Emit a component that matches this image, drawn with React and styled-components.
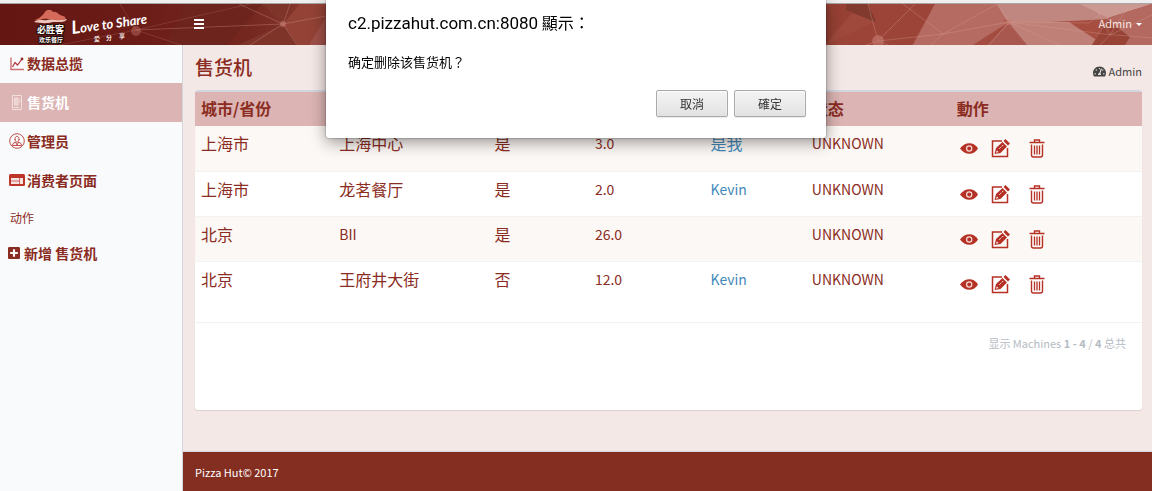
import React from "react";
import styled, { createGlobalStyle, css } from "styled-components";
import { FaTachometerAlt, FaPlusSquare } from "react-icons/fa";

const latin = '"Noto Sans CJK SC", "Open Sans", sans-serif';

const Global = createGlobalStyle`
  *, *::before, *::after { box-sizing: border-box; }
  html, body, #root { height: 100%; }
  body { margin: 0; font-family: ${latin}; font-size: 14px; color: #8b2c22; background: #f4e8e6; }
  a { text-decoration: none; }
  button { font-family: inherit; cursor: pointer; }
`;

const Page = styled.div`
  display: flex;
  flex-direction: column;
  min-height: 100%;
`;

const BrowserEdge = styled.div`
  height: 4px;
  flex: none;
  background: #f0eff0;
  border-bottom: 1px solid #a9a3a3;
`;

const Header = styled.header`
  position: relative;
  display: flex;
  align-items: center;
  height: 41px;
  flex: none;
  overflow: hidden;
  background: #7c261c;
`;

const Backdrop = styled.svg`
  position: absolute;
  inset: 0;
  width: 100%;
  height: 100%;
`;

const Brand = styled.a`
  position: relative;
  display: flex;
  width: 182px;
  height: 41px;
  padding-left: 32px;
`;

const MenuButton = styled.button`
  position: relative;
  display: flex;
  padding: 0 12px 2px;
  border: 0;
  background: none;
  color: #fff;
`;

const UserButton = styled.button`
  position: relative;
  display: flex;
  align-items: center;
  gap: 4px;
  margin-left: auto;
  padding: 0 10px 4px;
  border: 0;
  background: none;
  color: #f6e6e3;
  font-size: 11px;
  line-height: 16px;
`;

const Caret = styled.span`
  margin-top: 4px;
  border: 3px solid transparent;
  border-top-color: #fff;
  border-bottom: 0;
`;

const Body = styled.div`
  display: flex;
  flex: 1;
`;

const Sidebar = styled.nav`
  width: 183px;
  flex: none;
  background: #f9fafc;
  border-right: 1px solid #d2d6de;
`;

const NavItem = styled.a`
  display: flex;
  align-items: center;
  gap: ${(p) => (p.$compact ? 4 : 2)}px;
  height: ${(p) => (p.$first ? 38 : 39)}px;
  padding-left: ${(p) => (p.$compact ? 8 : 9)}px;
  padding-bottom: ${(p) => (p.$compact ? 0 : 2)}px;
  font-size: 14px;
  font-weight: 700;
  color: #8b2c22;
  ${(p) => p.$active && css`
    background: #dbb4b3;
    color: #fff;
  `}
  svg { width: ${(p) => (p.$compact ? 12 : 16)}px; height: 16px; flex: none; }
`;

const NavHeading = styled.div`
  padding: 9px 10px 0;
  height: 33px;
  font-size: 12px;
  line-height: 18px;
`;

const Main = styled.main`
  display: flex;
  flex: 1;
  flex-direction: column;
  min-width: 0;
`;

const TitleBar = styled.div`
  display: flex;
  align-items: flex-start;
  justify-content: space-between;
  height: 45px;
  padding: 7px 10px 0 12px;
`;

const Title = styled.h1`
  margin: 0;
  font-size: 19px;
  line-height: 30px;
  font-weight: 500;
`;

const Crumb = styled.a`
  display: flex;
  align-items: center;
  gap: 3px;
  padding-top: 11px;
  font-size: 11px;
  line-height: 16px;
  color: #444;
`;

const Card = styled.section`
  flex: 1;
  margin: 0 10px 41px 12px;
  background: #fff;
  border-top: 2px solid #d2d6de;
  border-radius: 3px;
  box-shadow: 0 1px 1px rgba(0, 0, 0, 0.1);
`;

const Table = styled.table`
  width: 100%;
  border-collapse: collapse;
  table-layout: fixed;
  text-align: left;
`;

const Col = styled.col`
  width: ${(p) => p.$w};
`;

const Th = styled.th`
  height: 34px;
  padding: 0 6px 2px;
  background: #dbb4b3;
  font-size: 16px;
  line-height: 24px;
  font-weight: 700;
`;

const Row = styled.tr`
  height: 45px;
  border-bottom: 1px solid #f2f2f2;
  background: ${(p) => (p.$odd ? "#fcf8f5" : "#fff")};
  &:last-child { height: 61px; }
`;

const Td = styled.td`
  padding: 5px 6px 0;
  vertical-align: top;
  font-size: ${(p) => (p.$latin ? 14 : 16)}px;
  line-height: 24px;
  a { color: #4489b9; }
`;

const Actions = styled.div`
  display: flex;
  align-items: center;
  gap: 12px;
  padding: 8px 0 0 3px;
`;

const IconButton = styled.button`
  display: flex;
  margin-right: ${(p) => (p.$wide ? 7 : 0)}px;
  padding: 0;
  border: 0;
  background: none;
  color: #b53126;
`;

const Summary = styled.p`
  margin: 0;
  padding: 11px 16px;
  text-align: right;
  font-size: 11px;
  line-height: 18px;
  color: #b5bbc3;
`;

const Footer = styled.footer`
  height: 40px;
  flex: none;
  padding: 11px 12px;
  border-top: 1px solid #d2d6de;
  background: #842d21;
  color: #fff;
  font-size: 11px;
  line-height: 18px;
`;

const Dialog = styled.div`
  position: fixed;
  top: 0;
  left: 50%;
  width: 500px;
  transform: translateX(-50%);
  padding: 10px 20px 21px 22px;
  background: #fff;
  border-radius: 0 0 3px 3px;
  box-shadow: 0 0 2px rgba(0, 0, 0, 0.5), 0 4px 16px rgba(0, 0, 0, 0.42);
  color: #000;
`;

const DialogTitle = styled.h2`
  margin: 0 0 16px;
  font-family: "Noto Sans CJK TC", sans-serif;
  font-size: 16px;
  line-height: 24px;
  font-weight: 400;
`;

const Host = styled.span`
  font-family: Roboto, sans-serif;
  font-size: 17px;
`;

const DialogText = styled.p`
  margin: 0 0 17px;
  font-family: "Noto Sans CJK TC", sans-serif;
  font-size: 13px;
  line-height: 22px;
`;

const DialogButtons = styled.div`
  display: flex;
  justify-content: flex-end;
  gap: 6px;
`;

const DialogButton = styled.button`
  width: 72px;
  height: 27px;
  padding: 0;
  border: 1px solid #aaa;
  border-radius: 2px;
  background: linear-gradient(#f3f3f3, #ededed 40%, #e2e2e2);
  box-shadow: 0 1px 0 rgba(0, 0, 0, 0.08), inset 0 1px 2px rgba(255, 255, 255, 0.75);
  color: #333;
  font-family: "Noto Sans CJK TC", sans-serif;
  font-size: 12px;
`;

const HeaderBackdrop = () => (
  <Backdrop viewBox="0 0 1152 41" preserveAspectRatio="none" aria-hidden="true">
    <defs>
      <linearGradient id="sky">
        <stop offset="0" stopColor="#631612" />
        <stop offset=".12" stopColor="#6c1c17" />
        <stop offset=".22" stopColor="#752820" />
        <stop offset=".28" stopColor="#8d3e34" />
        <stop offset="1" stopColor="#a94f42" />
      </linearGradient>
    </defs>
    <path fill="url(#sky)" d="M0 0h1152v41H0z" />
    <path fill="#6c241d" d="M187 0h75l-35 41h-62z" />
    <path fill="#7f342a" d="M238 41 283 20 262 0h31l-8 22 13 19z" />
    <path fill="#944236" d="M283 20 300 0h26v41h-28z" />
    <path fill="#9e5048" d="M309 41 326 13v28z" />
    <path fill="#974034" d="M826 0h34l-34 39z" />
    <path fill="#833a2e" d="M846 0h22l14 21-36-15z" />
    <path fill="#9c4438" d="M868 0h67l-24 41h-85l50-24z" />
    <path fill="#b56b61" d="M935 0h62l12 15-60 16-35 10z" />
    <path fill="#b56b61" d="m935 0-22 41h60l36-23z" />
    <path fill="#c08780" d="M997 0h112v15l-100 5z" />
    <path fill="#be8077" d="m1009 18 60 0 35 23h-116z" />
    <path fill="#a95850" d="m987 41 22-22 18 22z" />
    <path fill="#cb9992" d="M1080 0h72l-44 14z" />
    <path fill="#b36960" d="m1108 14 44-14v41h-60z" />
    <path fill="#974436" d="m1092 41 16-25 22 17-5 8z" />
    <g stroke="#dda49a" strokeOpacity=".3" strokeWidth="1" fill="none">
      <path d="M136 26 250 0M136 26 120 0M136 26l45 15M60 41l76-15" strokeOpacity=".18" />
      <path d="M239 0l44 20 43-8M250 41l33-21 7-20M283 20l14 21M136 26l147-6M868 0l10 37 37-37M878 37l65-7L903 0M878 37l-12 4M878 37l10 4M943 30l-12 11M943 30l66-12L997 0M943 30l54-30M1009 18l80 1 25-19M1009 18l50 23M1009 18l-20 23M1009 18l95 12 48 4M1110 31l-16-31M1110 31l20-31M1110 31l-10 10M1110 31l42-20" />
    </g>
    <g fill="#c77b70" fillOpacity=".6">
      <circle cx="136" cy="27" r="5" fillOpacity=".4" />
      <circle cx="283" cy="20" r="3" />
      <circle cx="878" cy="37" r="6" />
      <circle cx="1009" cy="18" r="3" />
    </g>
  </Backdrop>
);

const Logo = () => (
  <svg width="120" height="41" viewBox="0 0 120 41" role="img" aria-label="必胜客 Love to Share">
    <path fill="#ebc5bb" d="M2 18c6-4 9-1 13-2 7-2 12 1 20-1-2 4-8 3-14 3-7 2-12 1-19 0z" />
    <path fill="#d56a5b" d="M3 16C8 14 10 12 13 8c2-3 6-3 8 0 4-1 5 3 10 4 4 1 3 4-2 4-7 1-12-2-18-1-4 1-7 2-8 1z" />
    <g fontFamily="Noto Sans CJK SC, sans-serif" fontWeight="700" fill="#fff" stroke="#210b08" strokeWidth="2" paintOrder="stroke">
      <text x="5" y="29" fontSize="9">必胜客</text>
      <text x="7" y="38" fontSize="6">欢乐餐厅</text>
    </g>
    <g transform="rotate(-8 40 29)" fontFamily="Lato, sans-serif" fontWeight="700" fontStyle="italic" fill="#fff">
      <text x="40" y="30" fontSize="13"><tspan fontSize="18">L</tspan>ove to Share</text>
    </g>
    <g fontFamily="Noto Sans CJK SC, sans-serif" fontWeight="700" fontSize="6" fill="#f5e8e6">
      <text x="62" y="37">爱</text><text x="74" y="36">分</text><text x="87" y="34">享</text>
    </g>
  </svg>
);

const ChartIcon = () => (
  <svg viewBox="0 0 16 16" fill="none" stroke="#cf6f70" aria-hidden="true">
    <path d="M2 2.500v12h13" strokeWidth="1.400" />
    <path d="m3.500 12 2.500-4.500 2.500 2.500 4.500-6" stroke="#b5353a" strokeWidth="1.200" />
    <circle cx="13" cy="4" r="1.400" fill="#9b2a2a" stroke="none" />
  </svg>
);
const MachineIcon = () => (
  <svg viewBox="0 0 16 16" fill="none" stroke="#f3dfdd" aria-hidden="true">
    <path d="M3.500 1.500h9v14h-9z" />
    <path d="M5.500 4h3.500v7H5.500z" fill="#ecd2d0" />
    <path d="M10 5l1.500 2.500L10 9M5 13.500h5" />
  </svg>
);
const AdminIcon = () => (
  <svg viewBox="0 0 16 16" fill="none" stroke="#c2514b" aria-hidden="true">
    <circle cx="8" cy="8" r="7.300" />
    <path d="M6 7c-.5-5 4.500-5 4 0M6 6c0 4 4 4 4 0M6.500 9 4 10.500l-.5 2h9l-.5-2L9.500 9M6.500 9 8 12l1.500-3" />
  </svg>
);
const PageIcon = () => (
  <svg viewBox="0 0 16 16" aria-hidden="true">
    <rect x="0" y="2" width="16" height="12" rx="1.500" fill="#bd3529" />
    <path d="M2 6h12v6H2z" fill="#f6e3e1" />
    <path d="M2 9h8M10.500 6v6" stroke="#cd6a62" />
  </svg>
);
const EyeIcon = () => (
  <svg width="19" height="19" viewBox="0 0 19 19" aria-hidden="true">
    <path d="M0 9.500c5-7 14-7 18 0-4 7-13 7-18 0z" fill="currentColor" />
    <circle cx="9.200" cy="9.500" r="2.600" fill="currentColor" stroke="#f6dfda" strokeWidth="1.200" />
  </svg>
);
const EditIcon = () => (
  <svg width="19" height="19" viewBox="0 0 19 19" aria-hidden="true">
    <path d="M11 2H1.500v15.500h15V9" fill="none" stroke="currentColor" strokeWidth="1.500" />
    <path d="M3.500 15 5 9l6.500-6L16 7.500 9.500 14zM12.500 2l2-2 4.500 4.500-2 2z" fill="currentColor" />
    <path d="m5 13.700.8-2.300 1.700 1.700z" fill="#fff" />
    <path d="m8.500 9.500 1-1M11 7.200l1-1" stroke="#f6dfda" strokeLinecap="round" />
  </svg>
);
const TrashIcon = () => (
  <svg width="16" height="19" viewBox="0 0 16 19" fill="none" stroke="currentColor" aria-hidden="true">
    <path d="M.5 3.500h15M5.500 3V1h5v2M2.500 5.500v10.500q0 2 2 2h7q2 0 2-2V5.500" strokeWidth="1.400" />
    <path d="M5.500 6.500v9M8 6.500v9M10.500 6.500v9" strokeWidth="1.300" />
  </svg>
);

const machines = [
  { city: "上海市", place: "上海中心", on: "是", value: "3.0", owner: "是我" },
  { city: "上海市", place: "龙茗餐厅", on: "是", value: "2.0", owner: "Kevin" },
  { city: "北京", place: "BII", on: "是", value: "26.0", owner: "" },
  { city: "北京", place: "王府井大街", on: "否", value: "12.0", owner: "Kevin" },
];
const columns = ["城市/省份", "地点", "启用", "库存", "管理员", "状态", "動作"];
const widths = ["14.6%", "16.4%", "10.6%", "12.2%", "10.7%", "15.3%", "20.2%"];
const isLatin = (s) => /^[\x20-\x7e]*$/.test(s);

export default function App() {
  return (
    <>
      <Global />
      <Page>
        <BrowserEdge />
        <Header>
          <HeaderBackdrop />
          <Brand href="#"><Logo /></Brand>
          <MenuButton aria-label="菜单">
            <svg width="10" height="10" viewBox="0 0 10 10" stroke="#fff" strokeWidth="2" aria-hidden="true">
              <path d="M0 1h10M0 5h10M0 9h10" />
            </svg>
          </MenuButton>
          <UserButton>Admin <Caret /></UserButton>
        </Header>
        <Body>
          <Sidebar>
            <NavItem href="#" $first><ChartIcon />数据总揽</NavItem>
            <NavItem href="#" $active><MachineIcon />售货机</NavItem>
            <NavItem href="#"><AdminIcon />管理员</NavItem>
            <NavItem href="#"><PageIcon />消费者页面</NavItem>
            <NavHeading>动作</NavHeading>
            <NavItem href="#" $compact><FaPlusSquare />新增 售货机</NavItem>
          </Sidebar>
          <Main>
            <TitleBar>
              <Title>售货机</Title>
              <Crumb href="#"><FaTachometerAlt size={13} />Admin</Crumb>
            </TitleBar>
            <Card>
              <Table>
                <colgroup>{widths.map((w, i) => <Col key={i} $w={w} />)}</colgroup>
                <thead><tr>{columns.map((c) => <Th key={c} scope="col">{c}</Th>)}</tr></thead>
                <tbody>
                  {machines.map((m, i) => (
                    <Row key={i} $odd={i % 2 === 0}>
                      <Td>{m.city}</Td>
                      <Td $latin={isLatin(m.place)}>{m.place}</Td>
                      <Td>{m.on}</Td>
                      <Td $latin>{m.value}</Td>
                      <Td $latin={isLatin(m.owner)}>{m.owner && <a href="#">{m.owner}</a>}</Td>
                      <Td $latin>UNKNOWN</Td>
                      <Td>
                        <Actions>
                          <IconButton aria-label="查看"><EyeIcon /></IconButton>
                          <IconButton aria-label="编辑" $wide><EditIcon /></IconButton>
                          <IconButton aria-label="删除"><TrashIcon /></IconButton>
                        </Actions>
                      </Td>
                    </Row>
                  ))}
                </tbody>
              </Table>
              <Summary>显示 Machines <b>1 - 4</b> / <b>4</b> 总共</Summary>
            </Card>
            <Footer>Pizza Hut© 2017</Footer>
          </Main>
        </Body>
      </Page>
      <Dialog role="dialog" aria-labelledby="dialog-title">
        <DialogTitle id="dialog-title"><Host>c2.pizzahut.com.cn:8080</Host> 顯示：</DialogTitle>
        <DialogText>确定删除该售货机？</DialogText>
        <DialogButtons>
          <DialogButton>取消</DialogButton>
          <DialogButton>確定</DialogButton>
        </DialogButtons>
      </Dialog>
    </>
  );
}
